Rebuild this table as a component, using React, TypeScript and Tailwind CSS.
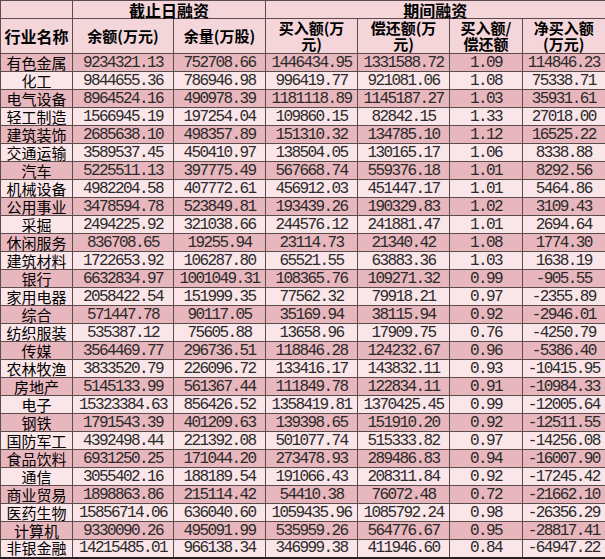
import { FC } from 'react';

// 行业融资数据
const rows: string[][] = [
	['有色金属', '9234321.13', '752708.66', '1446434.95', '1331588.72', '1.09', '114846.23'],
	['化工', '9844655.36', '786946.98', '996419.77', '921081.06', '1.08', '75338.71'],
	['电气设备', '8964524.16', '490978.39', '1181118.89', '1145187.27', '1.03', '35931.61'],
	['轻工制造', '1566945.19', '197254.04', '109860.15', '82842.15', '1.33', '27018.00'],
	['建筑装饰', '2685638.10', '498357.89', '151310.32', '134785.10', '1.12', '16525.22'],
	['交通运输', '3589537.45', '450410.97', '138504.05', '130165.17', '1.06', '8338.88'],
	['汽车', '5225511.13', '397775.49', '567668.74', '559376.18', '1.01', '8292.56'],
	['机械设备', '4982204.58', '407772.61', '456912.03', '451447.17', '1.01', '5464.86'],
	['公用事业', '3478594.78', '523849.81', '193439.26', '190329.83', '1.02', '3109.43'],
	['采掘', '2494225.92', '321038.66', '244576.12', '241881.47', '1.01', '2694.64'],
	['休闲服务', '836708.65', '19255.94', '23114.73', '21340.42', '1.08', '1774.30'],
	['建筑材料', '1722653.92', '106287.80', '65521.55', '63883.36', '1.03', '1638.19'],
	['银行', '6632834.97', '1001049.31', '108365.76', '109271.32', '0.99', '-905.55'],
	['家用电器', '2058422.54', '151999.35', '77562.32', '79918.21', '0.97', '-2355.89'],
	['综合', '571447.78', '90117.05', '35169.94', '38115.94', '0.92', '-2946.01'],
	['纺织服装', '535387.12', '75605.88', '13658.96', '17909.75', '0.76', '-4250.79'],
	['传媒', '3564469.77', '296736.51', '118846.28', '124232.67', '0.96', '-5386.40'],
	['农林牧渔', '3833520.79', '226096.72', '133416.17', '143832.11', '0.93', '-10415.95'],
	['房地产', '5145133.99', '561367.44', '111849.78', '122834.11', '0.91', '-10984.33'],
	['电子', '15323384.63', '856426.52', '1358419.81', '1370425.45', '0.99', '-12005.64'],
	['钢铁', '1791543.39', '401209.63', '139398.65', '151910.20', '0.92', '-12511.55'],
	['国防军工', '4392498.44', '221392.08', '501077.74', '515333.82', '0.97', '-14256.08'],
	['食品饮料', '6931250.25', '171044.20', '273478.93', '289486.83', '0.94', '-16007.90'],
	['通信', '3055402.16', '188189.54', '191066.43', '208311.84', '0.92', '-17245.42'],
	['商业贸易', '1898863.86', '215114.42', '54410.38', '76072.48', '0.72', '-21662.10'],
	['医药生物', '15856714.06', '636040.60', '1059435.96', '1085792.24', '0.98', '-26356.29'],
	['计算机', '9330090.26', '495091.99', '535959.26', '564776.67', '0.95', '-28817.41'],
	['非银金融', '14215485.01', '966138.34', '346999.38', '411946.60', '0.84', '-64947.22'],
];

const cjk = "font-['Noto_Sans_CJK_SC',sans-serif]";
const th = `border border-[#5a4b4d] bg-[#f3d5da] text-center font-bold text-[15px] leading-[16px] text-black p-0 ${cjk}`;
const td = 'border border-[#5a4b4d] text-center p-0 whitespace-nowrap';

const App: FC = () => {
	return (
		<div className="w-[605px] h-[559px] overflow-hidden bg-white">
			<table className="w-[605px] table-fixed border-collapse border-r-2 border-b-2 border-[#2a2021]">
				<colgroup>
					<col className="w-[72px]" />
					<col className="w-[101px]" />
					<col className="w-[92px]" />
					<col className="w-[92px]" />
					<col className="w-[92px]" />
					<col className="w-[73px]" />
					<col className="w-[83px]" />
				</colgroup>
				<thead>
					<tr className="h-[18px]">
						<th className={th}></th>
						<th colSpan={2} className={`${th} text-[16px]`}>
							截止日融资
						</th>
						<th colSpan={4} className={`${th} text-[16px]`}>
							期间融资
						</th>
					</tr>
					<tr className="h-[35px]">
						<th className={`${th} text-[16px]`}>行业名称</th>
						<th className={th}>余额(万元)</th>
						<th className={th}>余量(万股)</th>
						<th className={th}>
							买入额(万
							<br />
							元)
						</th>
						<th className={th}>
							偿还额(万
							<br />
							元)
						</th>
						<th className={th}>
							买入额/
							<br />
							偿还额
						</th>
						<th className={th}>
							净买入额
							<br />
							(万元)
						</th>
					</tr>
				</thead>
				<tbody>
					{rows.map((r, i) => (
						<tr key={r[0]} className={`h-[18px] ${i % 2 === 0 ? 'bg-[#e8b6bd]' : 'bg-[#fae5e9]'}`}>
							<td className={`${td} text-[15px] leading-[16px] text-black ${cjk}`}>{r[0]}</td>
							{r.slice(1).map((v, j) => (
								<td
									key={j}
									className={`${td} font-['Liberation_Mono',monospace] text-[16px] leading-[16px] tracking-[-1.6px] text-[#2b2b2b]`}
								>
									{v}
								</td>
							))}
						</tr>
					))}
				</tbody>
			</table>
		</div>
	);
};

export default App;
